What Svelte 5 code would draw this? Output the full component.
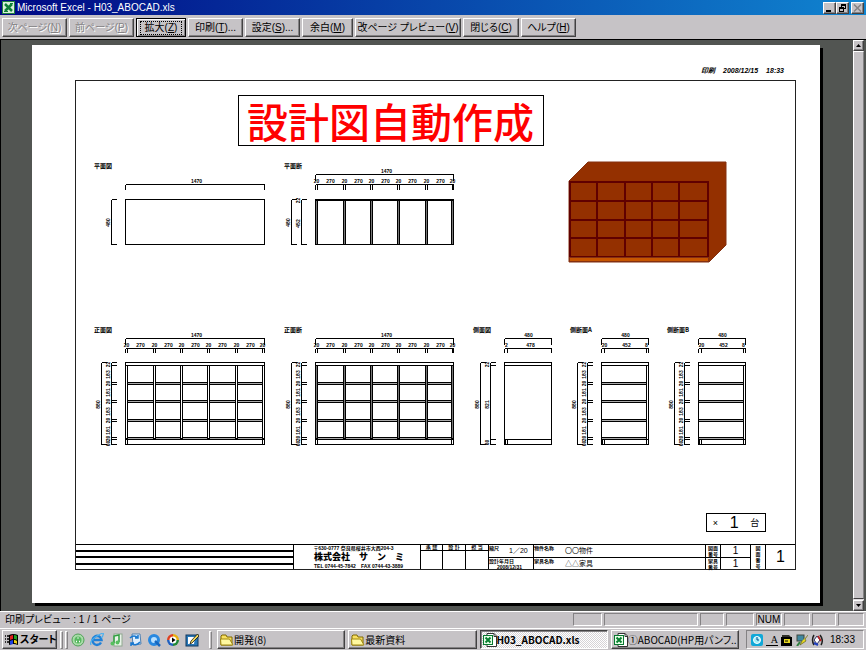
<script lang="ts">
	interface Command {
		text: string;
		key: string;
		more?: string;
		width: number;
		disabled?: boolean;
		focused?: boolean;
	}

	const commands: Command[] = [
		{ text: '次ページ', key: 'N', width: 65, disabled: true },
		{ text: '前ページ', key: 'P', width: 65, disabled: true },
		{ text: '拡大', key: 'Z', width: 50, focused: true },
		{ text: '印刷', key: 'T', more: '...', width: 55 },
		{ text: '設定', key: 'S', more: '...', width: 55 },
		{ text: '余白', key: 'M', width: 51 },
		{ text: '改ページ プレビュー', key: 'V', width: 106 },
		{ text: '閉じる', key: 'C', width: 56 },
		{ text: 'ヘルプ', key: 'H', width: 55 },
	];

	const statusCells = [29, 94, 24, 28, 26, 26, 24, 26];

	const tasks = [
		{ title: '開発(8)', icon: 'folder' },
		{ title: '最新資料', icon: 'folder' },
		{ title: 'H03_ABOCAD.xls', icon: 'excel', active: true },
		{ title: '①ABOCAD(HP用パンフ..', icon: 'excel' },
	];

	// board edges, measured from the left side of a cabinet
	const boards = [0, 28, 55, 82, 110, 137];
	const shelves = [382, 400, 419, 437];
	const shelfTicks = [362, 365, 382, 384, 400, 402, 419, 421, 437, 439, 444];
	const shelfLabels: [string, number][] = [
		['22', 364], ['183', 374], ['20', 383], ['181', 392], ['20', 401],
		['183', 411], ['20', 420], ['181', 430], ['20', 438], ['60', 443],
	];
	const colLabels: [string, number][] = boards.flatMap((b, i) =>
		i < 5 ? [['20', b + 1], ['270', b + 15]] as [string, number][] : [['20', b]] as [string, number][]
	);
	const colTicks = boards.flatMap((b) => [b, b + 2]);

	const labels: [string, number, number][] = [
		['平面図', 94, 168], ['平面断', 284, 168],
		['正面図', 94, 332], ['正面断', 284, 332],
		['側面図', 473, 332], ['側断面A', 570, 332], ['側断面B', 667, 332],
	];
</script>

{#snippet hdim(x: number, y: number, w: number, ticks: number[], texts: [string, number][], drop: number)}
	<path d="M{x} {y}h{w}" />
	{#each ticks as t}
		<path d="M{x + t} {y}v{drop}" />
	{/each}
	{#each texts as [s, t]}
		<text class="num" x={x + t} y={y - 2}>{s}</text>
	{/each}
{/snippet}

{#snippet vdim(x: number, ticks: number[], texts: [string, number][])}
	<path d="M{x} {ticks[0]}V{ticks[ticks.length - 1]}" />
	{#each ticks as t}
		<path d="M{x} {t}h5" />
	{/each}
	{#each texts as [s, t]}
		<text class="num" x={x - 2} y={t} transform="rotate(-90 {x - 2} {t})">{s}</text>
	{/each}
{/snippet}

{#snippet front(x: number, w: number, cut: boolean)}
	{@render hdim(x, 338, w, [0, w], [['1470', 71]], 6)}
	{@render hdim(x, 348, w, colTicks.map((t) => Math.min(t, w)), colLabels, 4)}
	{@render vdim(x - 24, [362, 444], [['880', 404]])}
	{@render vdim(x - 14, shelfTicks, shelfLabels)}
	<rect {x} y="362" width={w} height="82" />
	<path d="M{x} 365h{w}M{x} 439h{w}" />
	{#each shelves as y}
		<rect class="board" x={x + 2} {y} width={w - 4} height="2" />
	{/each}
	{#each boards as b}
		<rect class={cut ? 'cut' : 'panel'} x={x + Math.min(b, w - 2)} y="365" width="2" height="73" />
	{/each}
	<path d="M{x + 2} 439v5M{x + w - 2} 439v5" />
{/snippet}

{#snippet sideCut(x: number)}
	{@render hdim(x, 338, 47, [0, 47], [['480', 24]], 6)}
	{@render hdim(x, 348, 47, [0, 3, 45, 47], [['20', 3], ['452', 25], ['8', 45]], 4)}
	{@render vdim(x - 24, [362, 444], [['880', 404]])}
	{@render vdim(x - 14, shelfTicks, shelfLabels)}
	<rect {x} y="362" width="47" height="82" />
	<path d="M{x} 365h47M{x} 439h47M{x + 45} 365v79M{x + 1} 439v5M{x + 3} 439v5" />
	{#each shelves as y}
		<rect class="board" {x} {y} width="45" height="2" />
	{/each}
{/snippet}

{#snippet excelIcon()}
	<svg class="icon" viewBox="0 0 14 14" aria-hidden="true">
		<path d="M4 .5h7l2.500 2.500v10.500h-9.500z" fill="#fff" stroke="#333" />
		<path d="M11 .5v3h3" fill="none" stroke="#333" />
		<rect x=".5" y="2.500" width="9" height="9" fill="#e8ffe8" stroke="#087830" />
		<path d="M2.500 4.500l5 5M7.500 4.500l-5 5" stroke="#088030" stroke-width="2" />
	</svg>
{/snippet}

{#snippet folderIcon()}
	<svg class="icon" viewBox="0 0 14 14" aria-hidden="true">
		<path d="M1 12V3l1-1h4l1 2h5v8z" fill="#f8e060" stroke="#806800" />
		<path d="M1 12L.500 6h9l3.500 6z" fill="#fff8a0" stroke="#a08810" />
	</svg>
{/snippet}

<div class="window">
	<header class="titlebar">
		<svg class="app-icon" viewBox="0 0 13 13" aria-hidden="true">
			<rect x=".5" y=".5" width="12" height="12" fill="#d8f0d8" stroke="#208040" />
			<path d="M3 3l7 7M10 3l-7 7" stroke="#108038" stroke-width="2.500" />
			<path d="M2 10.500h4M8 2.500h3" stroke="#108038" />
		</svg>
		<span class="caption">Microsoft Excel - H03_ABOCAD.xls</span>
		<button class="sys" aria-label="最小化"><svg viewBox="0 0 9 8"><path d="M1 6h5v2h-5z" /></svg></button>
		<button class="sys" aria-label="元に戻す">
			<svg viewBox="0 0 9 8"><path d="M3 0h5v5h-2v3h-5v-5h2zM4 2v1h2v1h1v-2zM2 5v2h3v-2z" fill-rule="evenodd" /></svg>
		</button>
		<button class="sys close" aria-label="閉じる" disabled>
			<svg viewBox="0 0 9 8"><path d="M1 .5l7 7M8 .5l-7 7" fill="none" stroke="#848284" stroke-width="1.500" /></svg>
		</button>
	</header>

	<nav class="toolbar">
		{#each commands as c}
			<button class="cmd" class:focused={c.focused} disabled={c.disabled} style="width:{c.width}px">
				<span>{c.text}(<u>{c.key}</u>){c.more ?? ''}</span>
			</button>
		{/each}
	</nav>

	<main class="preview">
		<div class="paper">
			<div class="stamp"><span>印刷</span><span>2008/12/15</span><span>18:33</span></div>
			<div class="frame">
				<h1>設計図自動作成</h1>

				<svg class="drawing" viewBox="76 146 719 367">
					<g class="lines" transform="translate(.5 .5)">
						<!-- plan -->
						{@render hdim(125, 184, 139, [0, 139], [['1470', 71]], 5)}
						{@render vdim(111, [199, 244], [['480', 222]])}
						<rect x="125" y="199" width="139" height="45" />

						<!-- plan section -->
						{@render hdim(315, 174, 138, [0, 138], [['1470', 71]], 6)}
						{@render hdim(315, 184, 138, colTicks.map((t) => Math.min(t, 138)), colLabels, 5)}
						{@render vdim(291, [199, 244], [['480', 222]])}
						{@render vdim(301, [199, 244], [['22', 200], ['452', 223]])}
						<rect x="315" y="199" width="138" height="45" />
						<path d="M315 200h138" />
						{#each boards as b}
							<rect class="cut" x={315 + Math.min(b, 136)} y="200" width="2" height="44" />
						{/each}

						{@render front(125, 139, false)}
						{@render front(315, 138, true)}

						<!-- side -->
						{@render hdim(504, 338, 47, [0, 47], [['480', 24]], 6)}
						{@render hdim(504, 348, 47, [0, 3, 47], [['2', 2], ['478', 26]], 4)}
						{@render vdim(480, [362, 444], [['880', 404]])}
						{@render vdim(490, [362, 365, 439, 444], [['22', 364], ['821', 404], ['60', 442]])}
						<rect x="504" y="362" width="47" height="82" />
						<path d="M504 365h47M504 439h47M505 439v5M507 439v5" />

						{@render sideCut(601)}
						{@render sideCut(698)}
					</g>

					{#each labels as [s, x, y]}
						<text class="label" {x} {y}>{s}</text>
					{/each}

					<g class="model">
						<path d="M569 181l19-19h138v83l-17 17h-140z" fill="#943000" stroke="#843010" />
						<g fill="none" stroke="#600000" stroke-width="2">
							<rect x="570" y="182" width="138" height="75" />
							<path d="M597 182v75M625 182v75M652 182v75M679 182v75M570 201h138M570 220h138M570 238h138" />
						</g>
						<rect x="569.500" y="257.500" width="139" height="4" fill="#c65500" stroke="#843010" />
					</g>
				</svg>

				<div class="count"><small>×</small><b>1</b><small>台</small></div>

				<div class="block">
					<div class="ruled"><i></i><i></i><i></i><i></i></div>
					<div class="company">
						<span>〒630-0777 奈良県桜井市大西204-3</span>
						<strong>株式会社　サ　ン　ミ</strong>
						<span>TEL 0744-45-7842　FAX 0744-43-3889</span>
					</div>
					<div class="sign"><span>承 認</span></div>
					<div class="sign"><span>設 計</span></div>
					<div class="sign"><span>担 当</span></div>
					<div class="pair">
						<div class="scale"><span>縮尺</span><em>1／20</em></div>
						<div class="date"><span>設計年月日</span><span>2008/12/31</span></div>
					</div>
					<div class="pair wide">
						<div class="name"><span>物件名称</span><em>〇〇物件</em></div>
						<div class="name"><span>家具名称</span><em>△△家具</em></div>
					</div>
					<div class="pair tiny">
						<div><span>図面</span><span>番号</span></div>
						<div><span>家具</span><span>番号</span></div>
					</div>
					<div class="pair digit"><div>1</div><div>1</div></div>
					<div class="stack"><span>図</span><span>面</span><span>番</span><span>号</span></div>
					<div class="sheet">1</div>
				</div>
			</div>
		</div>
		<div class="scrollbar">
			<button aria-label="上へ"><svg viewBox="0 0 5 3"><path d="M0 3h5l-2.500-3z" /></svg></button>
			<div class="thumb"></div>
			<button aria-label="下へ"><svg viewBox="0 0 5 3"><path d="M0 0h5l-2.500 3z" /></svg></button>
		</div>
	</main>

	<div class="status">
		<span class="page">印刷プレビュー : 1 / 1 ページ</span>
		{#each statusCells as w, i}
			<span class="cell" style="width:{w}px">{i === 4 ? 'NUM' : ''}</span>
		{/each}
	</div>

	<footer class="taskbar">
		<button class="start">
			<svg viewBox="0 0 14 13" aria-hidden="true">
				<path d="M0 3h1M2 3h2M0 6h1M2 6h2M0 9h1M2 9h2" stroke="#000" stroke-width="1.500" />
				<path d="M4 2q4-2 9 0v10q-5-2-9 0z" fill="#000" />
				<path d="M5 3q2-1 3-1v4q-1 0-3 1z" fill="#e02020" />
				<path d="M9 2q2 0 3 1v4q-1-1-3-1z" fill="#20a020" />
				<path d="M5 8q2-1 3-1v4q-1 0-3 1z" fill="#2040e0" />
				<path d="M9 7q2 0 3 1v3q-1-1-3-1z" fill="#f0d010" />
			</svg>
			スタート
		</button>
		<i class="grip"></i><i class="grip"></i>
		<div class="launch">
			<svg viewBox="0 0 14 14"><circle cx="7" cy="7" r="6" fill="#a8dca8" stroke="#50a058" /><circle cx="7" cy="7" r="3.500" fill="#58b860" /><path d="M7 4.500v1M5 8.500h1M8 8.500h1" stroke="#fff" stroke-width="1.500" /></svg>
			<svg viewBox="0 0 14 14"><path d="M11 9.500A4.500 4.500 0 1 1 11.500 7H4" fill="none" stroke="#2080d8" stroke-width="2.500" /><path d="M1 12Q-1 8 7 3t6-1q0 2-2 3" fill="none" stroke="#48b0f0" stroke-width="1.200" /></svg>
			<svg viewBox="0 0 14 14"><rect x="5" y="1" width="8" height="12" fill="#e8f4e8" stroke="#90a890" /><path d="M5 10V3l5-1v7" fill="none" stroke="#30a040" stroke-width="1.500" /><circle cx="3.500" cy="10.500" r="2" fill="#58c060" /><circle cx="8.500" cy="9.500" r="2" fill="#58c060" /></svg>
			<svg viewBox="0 0 14 14"><path d="M4 1h8l1 10-8 1z" fill="#e0f0ff" stroke="#5080b0" /><path d="M2 5q4-4 8 0M10 2v3h-3M12 9q-4 5-9 1M3 13v-3h3" fill="none" stroke="#1878d0" stroke-width="1.500" /></svg>
			<svg viewBox="0 0 14 14"><circle cx="7" cy="7" r="4.500" fill="#b8e0ff" stroke="#2888e0" stroke-width="3" /><path d="M8 8l5 5" stroke="#1868c0" stroke-width="2.500" /></svg>
			<svg viewBox="0 0 14 14"><path d="M7 1a6 6 0 0 0-6 6h6z" fill="#e04020" /><path d="M7 1a6 6 0 0 1 6 6H7z" fill="#e8b010" /><path d="M1 7a6 6 0 0 0 6 6V7z" fill="#2060c0" /><path d="M13 7a6 6 0 0 1-6 6V7z" fill="#208838" /><circle cx="7" cy="7" r="3.500" fill="#fff" /><path d="M6 4.500l3.500 2.500L6 9.500z" /></svg>
			<svg viewBox="0 0 14 14"><rect x="1" y="2" width="12" height="11" fill="#2878b8" stroke="#103860" /><path d="M3 4h7l-1 7H3z" fill="#fff" /><path d="M12.500 1L6 8l-1 3 2-1 7-7z" fill="#f0d860" stroke="#000" stroke-width=".7" /></svg>
		</div>
		<i class="grip"></i>
		<div class="tasks">
			{#each tasks as t}
				<button class="task" class:active={t.active}>
					{#if t.icon === 'excel'}{@render excelIcon()}{:else}{@render folderIcon()}{/if}
					<span>{t.title}</span>
				</button>
			{/each}
		</div>
		<div class="tray">
			<svg viewBox="0 0 12 12"><rect width="12" height="12" rx="2" fill="#10a8d8" /><circle cx="6" cy="6" r="3.500" fill="#a0f0f8" stroke="#fff" /><path d="M6 3v3h2" fill="none" stroke="#084890" /></svg>
			<span class="ime">A</span>
			<svg viewBox="0 0 12 12"><rect y="3" width="11" height="9" /><path d="M1 1h7l2 2H1z" fill="#303028" /><rect x="3" y="5" width="6" height="4" fill="#e8d820" /><path d="M4 7h3" stroke="#000" /></svg>
			<svg viewBox="0 0 12 12"><rect x="1" y="1" width="7" height="6" fill="#4088a0" stroke="#404840" /><path d="M12 1L9 5l1 2-6 4 2-4" fill="#e8d820" stroke="#606020" stroke-width=".7" /><path d="M1 12l3-4" stroke="#308040" stroke-width="2" /></svg>
			<svg viewBox="0 0 12 12"><path d="M3 1q-3 5 0 10M9 1q4 5 1 10" fill="none" stroke="#202020" stroke-width="1.500" /><path d="M3 6l3-4 3 4-3 4z" fill="#fff" stroke="#303060" /><path d="M7 2l3 5" stroke="#c02020" stroke-width="1.500" /><path d="M3 9l4 2" stroke="#2040c0" stroke-width="2" /></svg>
			<time>18:33</time>
		</div>
	</footer>
</div>

<style>
	:global(body) {
		margin: 0;
		background: #c6c3c6;
	}
	.window {
		display: flex;
		flex-direction: column;
		min-height: 100vh;
		font: 10px/14px "Liberation Sans", "Noto Sans CJK JP", sans-serif;
		font-feature-settings: "palt";
		color: #000;
		background: #c6c3c6;
	}
	button {
		box-sizing: border-box;
		display: flex;
		align-items: center;
		padding: 0;
		border: 1px solid;
		border-color: #fff #424142 #424142 #fff;
		box-shadow: inset -1px -1px #848284;
		background: #c6c3c6;
		color: #000;
		font: inherit;
		font-feature-settings: inherit;
		white-space: nowrap;
	}
	svg {
		display: block;
		flex: none;
	}

	.titlebar {
		display: flex;
		align-items: center;
		height: 15px;
		padding: 0 2px;
		background: linear-gradient(90deg, #000884, #1084d0);
		color: #fff;
	}
	.app-icon {
		width: 13px;
		height: 13px;
	}
	.caption {
		flex: 1;
		padding-left: 2px;
	}
	.sys {
		justify-content: center;
		width: 13px;
		height: 12px;
	}
	.sys.close {
		margin-left: 2px;
	}
	.sys svg {
		width: 9px;
		height: 8px;
	}

	.toolbar {
		display: flex;
		gap: 2px;
		padding: 3px 2px 2px;
	}
	.cmd {
		justify-content: center;
		height: 19px;
	}
	.cmd:disabled {
		color: #848284;
		text-shadow: 1px 1px #fff;
	}
	.cmd.focused {
		border-color: #000;
		box-shadow: inset 1px 1px #fff, inset -1px -1px #848284;
	}
	.cmd.focused span {
		outline: 1px dotted #000;
		padding: 0 4px;
		line-height: 12px;
	}

	.preview {
		flex: 1;
		display: flex;
		justify-content: space-between;
		padding-right: 2px;
		border-top: 1px solid #000;
		border-left: 1px solid #000;
		background: #525552;
	}
	.paper {
		flex: 1;
		align-self: flex-start;
		margin: 5px 33px 8px 31px;
		padding: 20px 24px 33px 43px;
		background: #fff;
		box-shadow: 3px 3px #000;
	}
	.stamp {
		display: flex;
		justify-content: flex-end;
		gap: 8px;
		margin: 0 12px 3px 0;
		font: italic bold 7px/12px "Liberation Sans", "Noto Sans CJK JP", sans-serif;
	}
	.frame {
		border: 1px solid #222;
	}
	h1 {
		width: max-content;
		margin: 14px 0 0 162px;
		padding: 0 9px 0 8px;
		border: 1px solid #000;
		color: #f00;
		font: 500 41px/49px "Noto Sans CJK JP", sans-serif;
		font-feature-settings: normal;
	}
	.drawing {
		width: 100%;
		height: auto;
	}
	.lines {
		fill: none;
		stroke: #000;
		shape-rendering: crispEdges;
	}
	.lines .board {
		fill: #aaa;
	}
	.lines .panel {
		fill: #fff;
	}
	.lines .cut {
		fill: #777;
	}
	.num {
		fill: #000;
		stroke: none;
		font: bold 5px "Liberation Sans", sans-serif;
		text-anchor: middle;
	}
	.label {
		font: bold 6px "Noto Sans CJK JP", sans-serif;
	}

	.count {
		display: flex;
		align-items: center;
		justify-content: space-around;
		width: 58px;
		height: 17px;
		margin: 0 29px 12px auto;
		border: 1px solid #000;
	}
	.count b {
		font-size: 16px;
		font-weight: 400;
	}
	.count small {
		font-size: 9px;
	}

	.block {
		display: grid;
		grid-template-columns: 1fr 127px 22px 23px 23px 45px 172px 15px 30px 15px 30px;
		height: 24px;
		border-top: 1px solid #000;
		font-size: 5px;
		line-height: 6px;
		font-weight: 700;
	}
	.block > div + div {
		border-left: 1px solid #000;
	}
	.ruled {
		display: flex;
		flex-direction: column;
	}
	.ruled i {
		flex: 1;
	}
	.ruled i + i {
		border-top: 2px solid #000;
	}
	.company {
		display: flex;
		flex-direction: column;
		padding-left: 20px;
		white-space: nowrap;
	}
	.company strong {
		font-size: 9px;
		line-height: 12px;
		font-feature-settings: normal;
	}
	.sign span {
		display: block;
		border-bottom: 1px solid #000;
		text-align: center;
		line-height: 5px;
	}
	.pair {
		display: grid;
		grid-template-rows: 12px 12px;
	}
	.pair > div {
		box-sizing: border-box;
		display: flex;
	}
	.pair > div + div {
		border-top: 1px solid #000;
	}
	.pair em {
		font: 7px/12px "Liberation Sans", "Noto Sans CJK JP", sans-serif;
	}
	.scale em {
		margin-left: 10px;
	}
	.pair .date {
		flex-direction: column;
	}
	.date span + span {
		padding-left: 8px;
	}
	.name span {
		width: 31px;
	}
	.pair.tiny > div {
		flex-direction: column;
		align-items: center;
	}
	.digit > div {
		justify-content: center;
		font: 10px/12px "Liberation Sans", sans-serif;
	}
	.stack {
		display: flex;
		flex-direction: column;
		align-items: center;
	}
	.sheet {
		font: 16px/24px "Liberation Sans", sans-serif;
		text-align: center;
	}

	.scrollbar {
		display: flex;
		flex-direction: column;
		width: 11px;
		background: #dedbde;
	}
	.scrollbar button {
		justify-content: center;
		height: 11px;
	}
	.scrollbar svg {
		width: 5px;
		height: 3px;
	}
	.thumb {
		flex: 1;
		margin-bottom: 1px;
		border: 1px solid;
		border-color: #fff #848284 #424142 #fff;
		background: #c6c3c6;
	}

	.status {
		display: flex;
		gap: 2px;
		height: 14px;
		padding: 1px 2px 0;
		border-top: 1px solid #fff;
	}
	.page {
		flex: 1;
		padding-left: 3px;
	}
	.cell {
		box-sizing: border-box;
		height: 13px;
		border: 1px solid;
		border-color: #848284 #fff #fff #848284;
		text-align: center;
		line-height: 12px;
	}

	.taskbar {
		display: flex;
		align-items: center;
		height: 21px;
		padding: 0 2px;
		border-top: 1px solid #fff;
		margin-top: 1px;
	}
	.start {
		gap: 1px;
		width: 55px;
		height: 19px;
		margin-right: 3px;
		padding-left: 2px;
		font-weight: 700;
	}
	.start svg {
		width: 14px;
		height: 13px;
	}
	.grip {
		width: 1px;
		height: 16px;
		margin-right: 2px;
		border: 1px solid;
		border-color: #fff #848284 #848284 #fff;
	}
	.launch {
		display: flex;
		gap: 5px;
		padding: 0 10px 0 1px;
	}
	.launch svg {
		width: 14px;
		height: 14px;
	}
	.tasks {
		flex: 1;
		display: flex;
		gap: 3px;
		margin: 0 7px 0 3px;
	}
	.task {
		flex: 1;
		min-width: 0;
		height: 19px;
		padding-left: 2px;
		font-family: "Noto Sans CJK JP", sans-serif;
	}
	.task.active {
		border-color: #424142 #fff #fff #424142;
		box-shadow: inset 1px 1px #848284;
		background: repeating-conic-gradient(#fff 0 25%, #d6d3d6 0 50%) 0 0 / 2px 2px;
		font-weight: 700;
	}
	.icon {
		width: 14px;
		height: 14px;
	}
	.tray {
		display: flex;
		align-items: center;
		gap: 3px;
		box-sizing: border-box;
		width: 118px;
		height: 19px;
		padding: 0 8px 0 4px;
		border: 1px solid;
		border-color: #848284 #fff #fff #848284;
	}
	.tray svg {
		width: 12px;
		height: 12px;
	}
	.ime {
		width: 12px;
		border-bottom: 1px solid #000;
		line-height: 11px;
		text-align: right;
		font-family: "Liberation Serif", serif;
	}
	time {
		margin-left: auto;
	}
</style>
